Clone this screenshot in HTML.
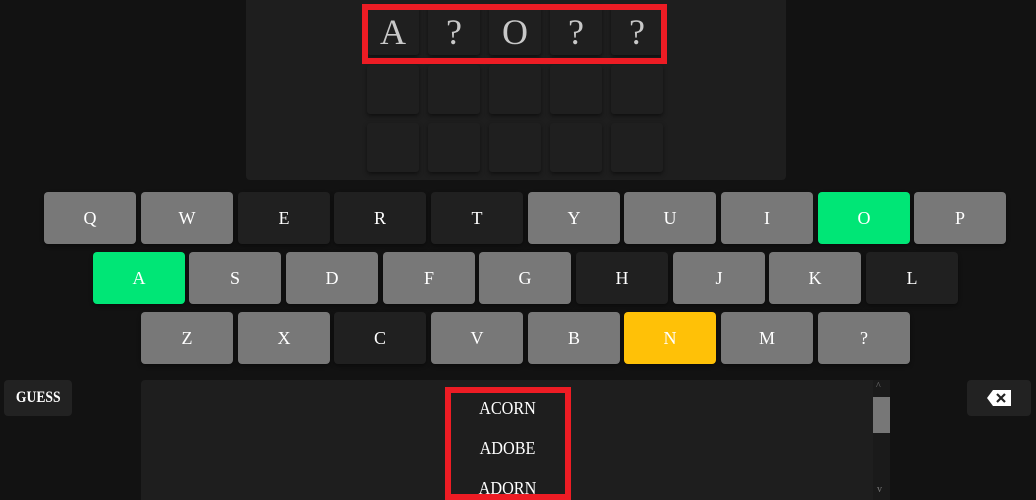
<!DOCTYPE html>
<html><head><style>
*{margin:0;padding:0;box-sizing:border-box}
html,body{width:1036px;height:500px;overflow:hidden}
body{background:#121212;position:relative;font-family:"Liberation Serif",serif;color:#fff}
.abs{position:absolute}
.panel{left:246px;top:0;width:540px;height:180px;background:#1e1e1e;border-radius:0 0 4px 4px}
.tile{position:absolute;width:52px;height:49px;background:#1f1f1f;border-radius:3px;box-shadow:0 2px 4px rgba(0,0,0,.5);color:#c8c8c8;font-size:36px;text-align:center;line-height:52px}
.key{position:absolute;width:92px;height:52px;border-radius:4px;background:#787878;text-align:center;line-height:52px;font-size:18px;color:#fff;box-shadow:0 2px 4px rgba(0,0,0,.4)}
.d{background:#202020}.g{background:#00e676}.y{background:#ffc107}
.red{position:absolute;border:6px solid #ed1c24}
.w{position:absolute;left:445px;width:125px;text-align:center;font-size:18px;line-height:20px;transform:scaleX(.9)}
</style></head><body>
<div class="abs panel"></div>
<div class="tile" style="left:367px;top:6px">A</div>
<div class="tile" style="left:428px;top:6px">?</div>
<div class="tile" style="left:489px;top:6px">O</div>
<div class="tile" style="left:550px;top:6px">?</div>
<div class="tile" style="left:611px;top:6px">?</div>
<div class="tile" style="left:367px;top:65px"></div><div class="tile" style="left:428px;top:65px"></div><div class="tile" style="left:489px;top:65px"></div><div class="tile" style="left:550px;top:65px"></div><div class="tile" style="left:611px;top:65px"></div>
<div class="tile" style="left:367px;top:123px"></div><div class="tile" style="left:428px;top:123px"></div><div class="tile" style="left:489px;top:123px"></div><div class="tile" style="left:550px;top:123px"></div><div class="tile" style="left:611px;top:123px"></div>
<div class="red" style="left:362px;top:4px;width:305px;height:60px"></div>

<div class="key" style="left:44px;top:192px">Q</div>
<div class="key" style="left:141px;top:192px">W</div>
<div class="key d" style="left:238px;top:192px">E</div>
<div class="key d" style="left:334px;top:192px">R</div>
<div class="key d" style="left:431px;top:192px">T</div>
<div class="key" style="left:528px;top:192px">Y</div>
<div class="key" style="left:624px;top:192px">U</div>
<div class="key" style="left:721px;top:192px">I</div>
<div class="key g" style="left:818px;top:192px">O</div>
<div class="key" style="left:914px;top:192px">P</div>

<div class="key g" style="left:93px;top:252px">A</div>
<div class="key" style="left:189px;top:252px">S</div>
<div class="key" style="left:286px;top:252px">D</div>
<div class="key" style="left:383px;top:252px">F</div>
<div class="key" style="left:479px;top:252px">G</div>
<div class="key d" style="left:576px;top:252px">H</div>
<div class="key" style="left:673px;top:252px">J</div>
<div class="key" style="left:769px;top:252px">K</div>
<div class="key d" style="left:866px;top:252px">L</div>

<div class="key" style="left:141px;top:312px">Z</div>
<div class="key" style="left:238px;top:312px">X</div>
<div class="key d" style="left:334px;top:312px">C</div>
<div class="key" style="left:431px;top:312px">V</div>
<div class="key" style="left:528px;top:312px">B</div>
<div class="key y" style="left:624px;top:312px">N</div>
<div class="key" style="left:721px;top:312px">M</div>
<div class="key" style="left:818px;top:312px">?</div>

<div class="abs" style="left:4px;top:380px;width:68px;height:36px;background:#222;border-radius:4px;font-size:16px;font-weight:bold;line-height:36px;text-align:center"><span style="display:inline-block;transform:scaleX(.85)">GUESS</span></div>
<div class="abs" style="left:141px;top:380px;width:749px;height:120px;background:#1e1e1e;border-radius:4px 4px 0 0"></div>
<div class="abs" style="left:873px;top:380px;width:17px;height:120px;background:#1a1a1a"></div>
<div class="abs" style="left:873px;top:397px;width:17px;height:36px;background:#777"></div>
<div class="abs" style="left:876px;top:381px;font-size:10px;color:#777">&#94;</div>
<div class="abs" style="left:877px;top:484px;font-size:10px;color:#777">v</div>
<div class="w" style="top:398px">ACORN</div>
<div class="w" style="top:438px">ADOBE</div>
<div class="w" style="top:478px">ADORN</div>
<div class="red" style="left:445px;top:387px;width:126px;height:113px"></div>
<div class="abs" style="left:967px;top:380px;width:64px;height:36px;background:#222;border-radius:4px"></div>
<svg class="abs" style="left:986px;top:389px" width="26" height="18" viewBox="0 0 26 18"><path d="M7 1H25V17H7L1 9Z" fill="#fff"/><path d="M11 5L19 13M19 5L11 13" stroke="#222" stroke-width="2.2"/></svg>
</body></html>
